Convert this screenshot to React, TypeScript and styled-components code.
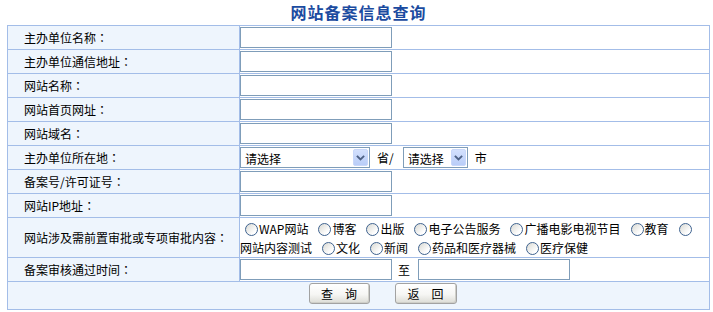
import React from 'react';
import styled, { createGlobalStyle } from 'styled-components';

const GlobalStyle = createGlobalStyle`
  body {
    margin: 0;
    background: #fff;
    color: #000;
    font-family: "Noto Sans CJK SC", "Liberation Sans", sans-serif;
    font-size: 12px;
  }
`;

const Page = styled.div`
  padding: 0 3px 0 7px;
`;

const Title = styled.h1`
  margin: 0;
  height: 25px;
  line-height: 25px;
  text-align: center;
  font-size: 16px;
  font-weight: bold;
  letter-spacing: 1px;
  color: #1b4ba0;
`;

const FormTable = styled.table`
  width: 703px;
  table-layout: fixed;
  border-collapse: collapse;
  border: 1px solid #a3bde8;
`;

const Col = styled.col<{ $w?: number }>`
  width: ${p => (p.$w ? `${p.$w}px` : 'auto')};
`;

const LabelCell = styled.td`
  background: #eef5fd;
  border: 1px solid #a3bde8;
  padding: 0 0 0 16px;
  line-height: 16px;
  white-space: nowrap;
  vertical-align: middle;
`;

// full-width colon centred in its em box, as in the original page font
const Colon = styled.span`
  font-family: "Noto Sans CJK TC", "Noto Sans CJK SC", sans-serif;
`;

const FieldCell = styled.td<{ $lines?: boolean }>`
  background: #fff;
  border: 1px solid #a3bde8;
  padding: ${p => (p.$lines ? '1px 0 0' : '1px 0')};
  line-height: ${p => (p.$lines ? '19px' : '21px')};
  vertical-align: middle;
`;

const ButtonCell = styled.td`
  background: #eef5fd;
  border: 1px solid #a3bde8;
  padding: 1px 0 5px;
`;

const TextInput = styled.input`
  box-sizing: border-box;
  width: 152px;
  height: 21px;
  margin: 0;
  padding: 0 3px;
  border: 1px solid #7f9db9;
  font: inherit;
  vertical-align: middle;
  display: block;
`;

const FieldRow = styled.div`
  display: flex;
  align-items: center;
`;

const Sep = styled.span<{ $l: number; $r: number }>`
  margin: 0 ${p => p.$r}px 0 ${p => p.$l}px;
  white-space: nowrap;
`;

const SelectWrap = styled.span<{ $w: number }>`
  position: relative;
  display: inline-block;
  width: ${p => p.$w}px;
  height: 21px;
`;

const NativeSelect = styled.select`
  appearance: none;
  box-sizing: border-box;
  width: 100%;
  height: 100%;
  margin: 0;
  padding: 0 18px 0 4px;
  border: 1px solid #7f9db9;
  border-radius: 0;
  background: #fff;
  color: #000;
  font: inherit;
  outline: none;
`;

const ArrowBox = styled.span`
  position: absolute;
  top: 2px;
  right: 2px;
  bottom: 2px;
  width: 15px;
  box-sizing: border-box;
  border: 1px solid #c8d7fa;
  border-radius: 2px;
  background: linear-gradient(#d3e0fd, #b9cdf8);
  pointer-events: none;
  display: flex;
  align-items: center;
  justify-content: center;

  svg {
    width: 9px;
    height: 6px;
  }
`;

const Radio = styled.input.attrs({ type: 'radio' })`
  appearance: none;
  box-sizing: border-box;
  width: 13px;
  height: 13px;
  margin: 0 1px 0 5px;
  border: 1px solid #3f6390;
  border-radius: 50%;
  background: linear-gradient(135deg, #d9d9d3, #ffffff 75%);
  vertical-align: middle;
  position: relative;
  top: -1px;
`;

const OptionText = styled.span`
  white-space: nowrap;
  margin-right: 5px;
`;

const ButtonBar = styled.div`
  display: flex;
  justify-content: center;
  gap: 25px;
  padding-left: 48px;
`;

const Button = styled.button<{ $w: number }>`
  box-sizing: border-box;
  width: ${p => p.$w}px;
  height: 21px;
  padding: 0;
  border: 1px solid #a2a2a2;
  border-radius: 3px;
  background: linear-gradient(#ffffff, #f6f6f4 55%, #dcdcd6);
  box-shadow: inset -1px -1px 0 #cfcfc9;
  font: inherit;
  line-height: 19px;
  color: #000;
  cursor: pointer;
`;

const Chevron = () => (
  <svg viewBox="0 0 9 6" fill="none" stroke="#4d6185" strokeWidth="1.8" strokeLinecap="square">
    <polyline points="1.5,1.5 4.5,4.5 7.5,1.5" />
  </svg>
);

const Select: React.FC<{ width: number }> = ({ width }) => (
  <SelectWrap $w={width}>
    <NativeSelect defaultValue="">
      <option value="">请选择</option>
    </NativeSelect>
    <ArrowBox>
      <Chevron />
    </ArrowBox>
  </SelectWrap>
);

const Label: React.FC<{ text: string }> = ({ text }) => (
  <LabelCell>
    {text}
    <Colon>：</Colon>
  </LabelCell>
);

const textRows = ['主办单位名称', '主办单位通信地址', '网站名称', '网站首页网址', '网站域名'];

const approvals = [
  'WAP网站',
  '博客',
  '出版',
  '电子公告服务',
  '广播电影电视节目',
  '教育',
  '网站内容测试',
  '文化',
  '新闻',
  '药品和医疗器械',
  '医疗保健',
];

export default function App() {
  return (
    <Page>
      <GlobalStyle />
      <Title>网站备案信息查询</Title>
      <FormTable>
        <colgroup>
          <Col $w={232} />
          <Col />
        </colgroup>
        <tbody>
          {textRows.map(label => (
            <tr key={label}>
              <Label text={label} />
              <FieldCell>
                <TextInput type="text" />
              </FieldCell>
            </tr>
          ))}
          <tr>
            <Label text="主办单位所在地" />
            <FieldCell>
              <FieldRow>
                <Select width={130} />
                <Sep $l={7} $r={9}>省/</Sep>
                <Select width={65} />
                <Sep $l={7} $r={0}>市</Sep>
              </FieldRow>
            </FieldCell>
          </tr>
          <tr>
            <Label text="备案号/许可证号" />
            <FieldCell>
              <TextInput type="text" />
            </FieldCell>
          </tr>
          <tr>
            <Label text="网站IP地址" />
            <FieldCell>
              <TextInput type="text" />
            </FieldCell>
          </tr>
          <tr>
            <Label text="网站涉及需前置审批或专项审批内容" />
            <FieldCell $lines>
              {approvals.map(name => (
                <React.Fragment key={name}>
                  <Radio name="approval" value={name} />
                  <OptionText>{name}</OptionText>
                </React.Fragment>
              ))}
            </FieldCell>
          </tr>
          <tr>
            <Label text="备案审核通过时间" />
            <FieldCell>
              <FieldRow>
                <TextInput type="text" />
                <Sep $l={6} $r={8}>至</Sep>
                <TextInput type="text" />
              </FieldRow>
            </FieldCell>
          </tr>
          <tr>
            <ButtonCell colSpan={2}>
              <ButtonBar>
                <Button type="button" $w={61}>查　询</Button>
                <Button type="button" $w={62}>返　回</Button>
              </ButtonBar>
            </ButtonCell>
          </tr>
        </tbody>
      </FormTable>
    </Page>
  );
}
